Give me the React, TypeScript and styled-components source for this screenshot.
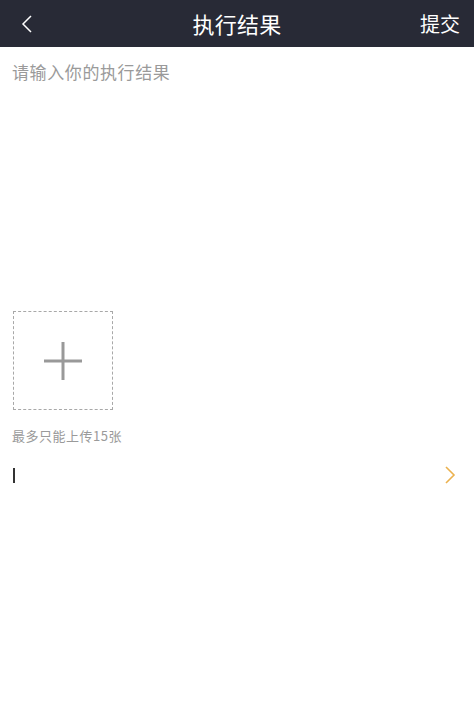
import React, { useState } from 'react';
import styled, { createGlobalStyle } from 'styled-components';

const GlobalStyle = createGlobalStyle`
  html, body {
    margin: 0;
    padding: 0;
    background: #fff;
  }
  body {
    font-family: "Noto Sans CJK SC", "Noto Sans", sans-serif;
  }
`;

const Page = styled.div`
  width: 474px;
  min-height: 703px;
  background: #fff;
  display: flex;
  flex-direction: column;
`;

const NavBar = styled.header`
  height: 47px;
  background: #282a36;
  display: grid;
  grid-template-columns: 80px 1fr 80px;
  align-items: center;
  color: #fff;
`;

const BackButton = styled.button`
  background: none;
  border: none;
  padding: 0 0 0 21px;
  height: 47px;
  display: flex;
  align-items: center;
  cursor: pointer;
`;

const Title = styled.h1`
  margin: 0;
  text-align: center;
  font-size: 22px;
  font-weight: 400;
  line-height: 47px;
  letter-spacing: 0.3px;
`;

const SubmitButton = styled.button`
  background: none;
  border: none;
  color: #fff;
  font-family: inherit;
  font-size: 20px;
  padding: 0 14px 0 0;
  text-align: right;
  line-height: 47px;
  cursor: pointer;
`;

const ResultInput = styled.textarea`
  display: block;
  box-sizing: border-box;
  width: 100%;
  height: 252px;
  border: none;
  outline: none;
  resize: none;
  padding: 12px 12px;
  font-family: inherit;
  font-size: 17px;
  letter-spacing: 0.6px;
  line-height: 26px;
  color: #333;
  &::placeholder {
    color: #9a9a9a;
  }
`;

const UploadSection = styled.section`
  padding: 12px 13px 0;
  display: flex;
  flex-direction: column;
`;

const UploadBox = styled.button`
  width: 100px;
  height: 99px;
  box-sizing: border-box;
  border: 1px dashed #a8a8a8;
  background: #fff;
  display: flex;
  align-items: center;
  justify-content: center;
  padding: 0;
  cursor: pointer;
`;

const Hint = styled.p`
  margin: 17px 0 0 -1px;
  font-size: 13px;
  letter-spacing: 0.5px;
  line-height: 18px;
  color: #9a9a9a;
`;

const SelectRow = styled.div`
  margin-top: 20px;
  padding: 0 18px 0 13px;
  height: 20px;
  display: flex;
  align-items: center;
  justify-content: space-between;
`;

const Caret = styled.span`
  width: 2px;
  height: 15px;
  background: #333;
`;

const App: React.FC = () => {
  const [text, setText] = useState('');

  return (
    <Page>
      <GlobalStyle />
      <NavBar>
        <BackButton aria-label="返回">
          <svg width="12" height="18" viewBox="0 0 12 18">
            <path d="M10 1 L2 9 L10 17" fill="none" stroke="#fff" strokeWidth="1.5" />
          </svg>
        </BackButton>
        <Title>执行结果</Title>
        <SubmitButton>提交</SubmitButton>
      </NavBar>
      <ResultInput
        placeholder="请输入你的执行结果"
        value={text}
        onChange={(e) => setText(e.target.value)}
      />
      <UploadSection>
        <UploadBox aria-label="上传图片">
          <svg width="38" height="38" viewBox="0 0 38 38">
            <path d="M0 19 H38 M19 0 V38" stroke="#999" strokeWidth="3" />
          </svg>
        </UploadBox>
        <Hint>最多只能上传15张</Hint>
      </UploadSection>
      <SelectRow>
        <Caret />
        <svg width="12" height="18" viewBox="0 0 12 18">
          <path d="M2 1 L10 9 L2 17" fill="none" stroke="#ebb14e" strokeWidth="1.6" />
        </svg>
      </SelectRow>
    </Page>
  );
};

export default App;
